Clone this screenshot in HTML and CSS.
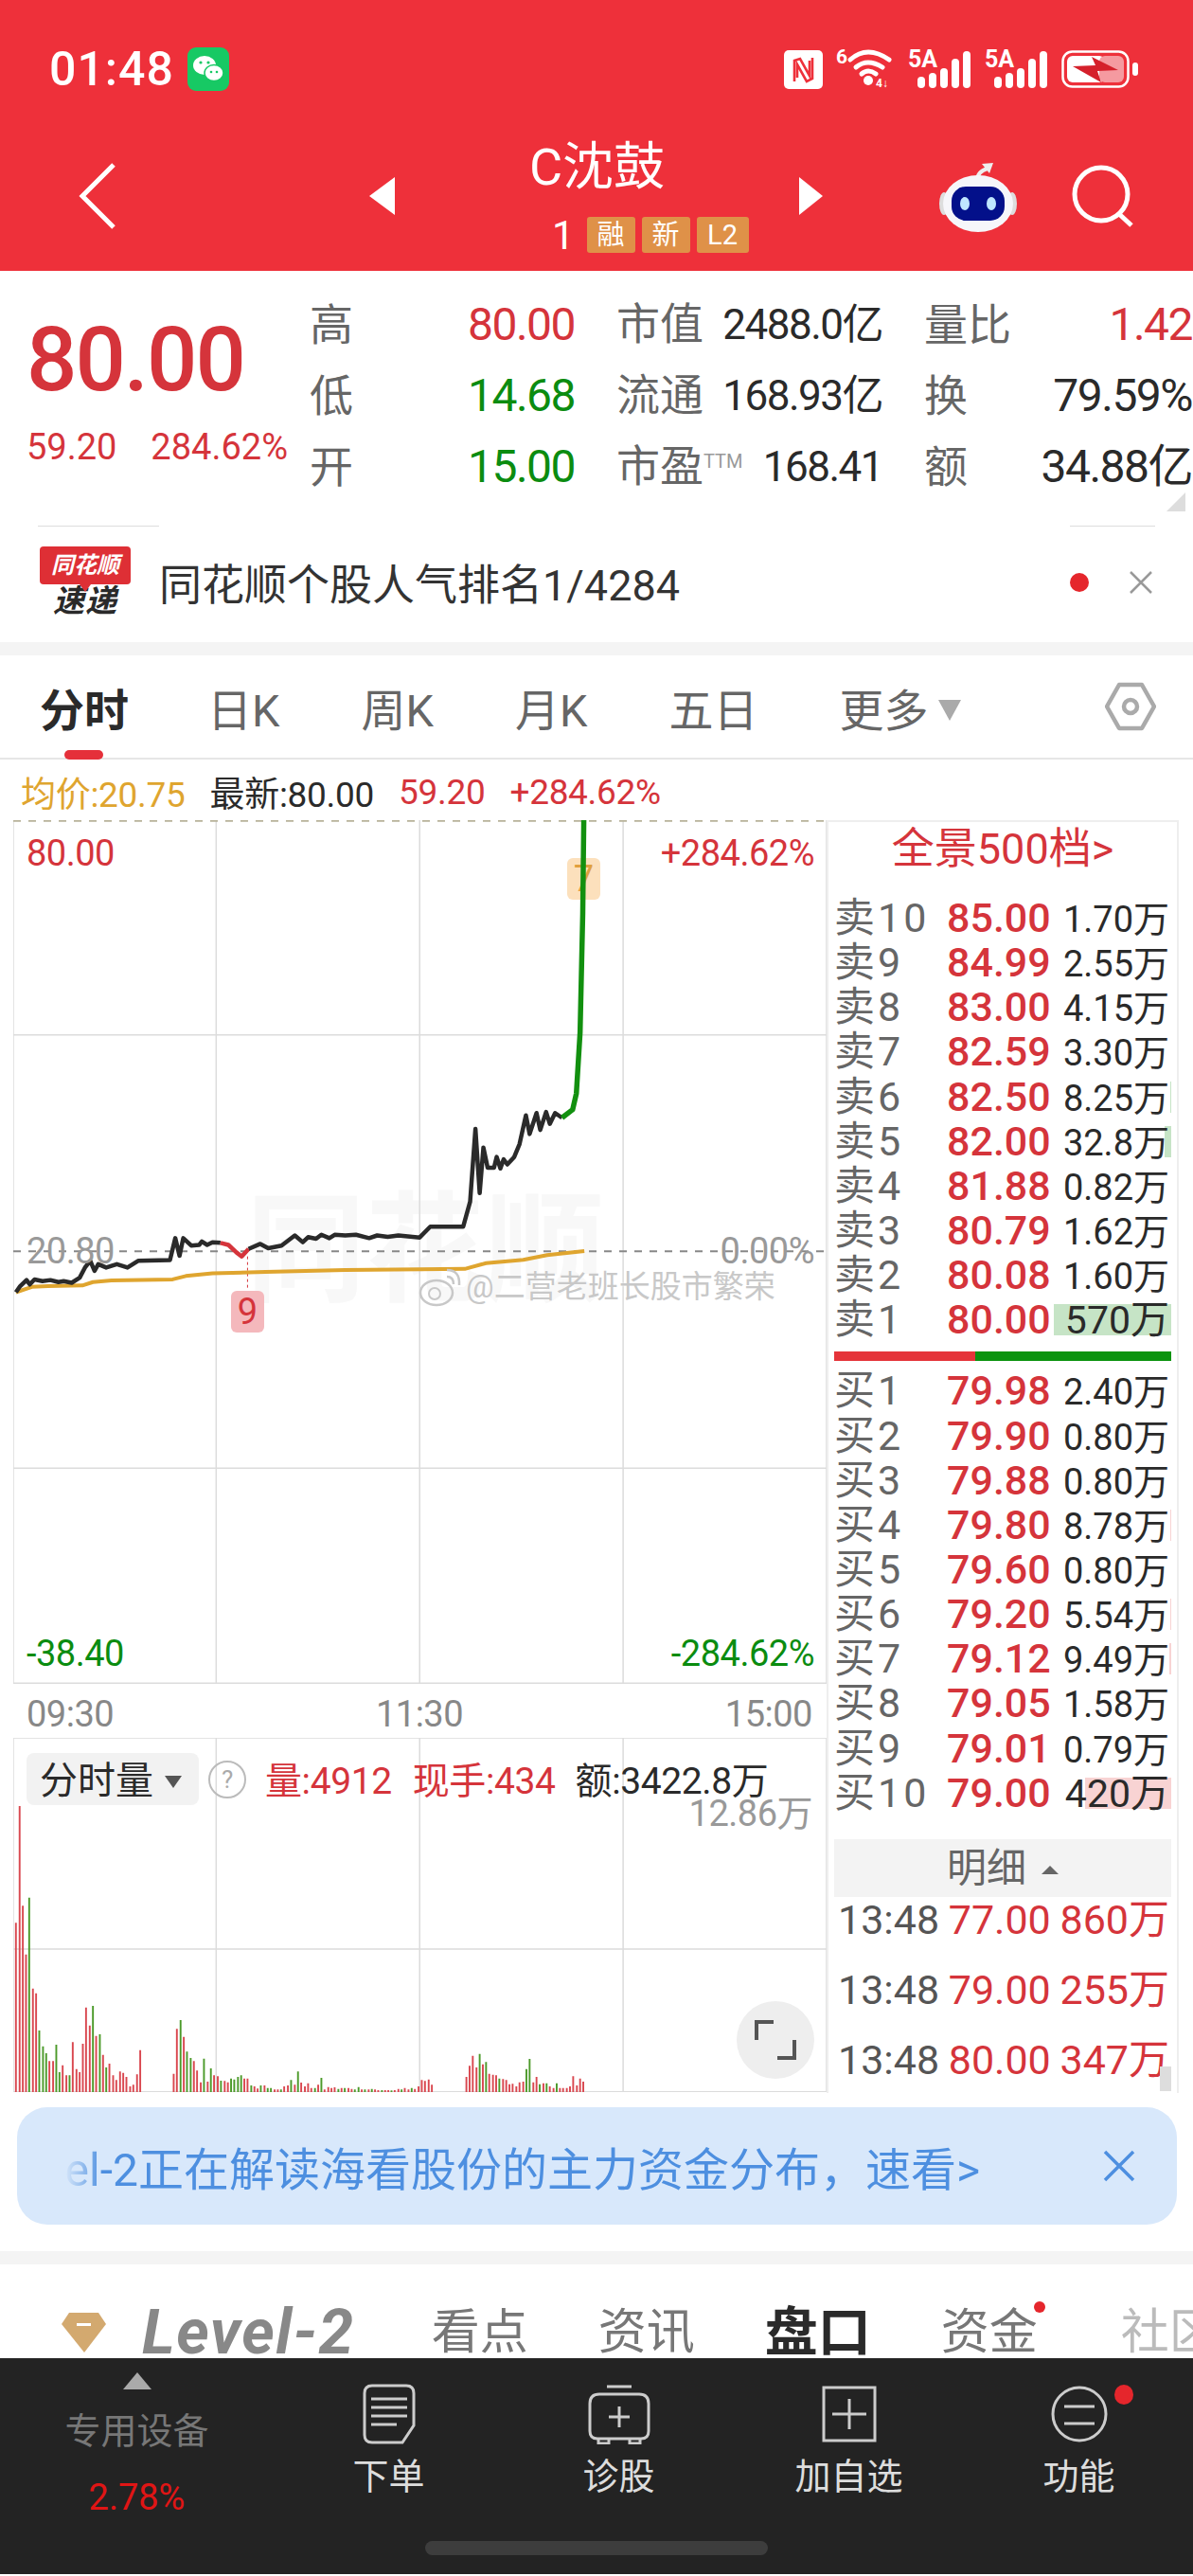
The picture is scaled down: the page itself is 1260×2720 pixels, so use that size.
FILE: index.html
```html
<!DOCTYPE html>
<html>
    <head>
        <meta charset="utf-8">
        <title>C沈鼓</title>
        <link rel="stylesheet" href="styles.css">
    </head>
    <body>
        <div class="topbar">
            <div class="status">
                <span class="clock">01:48</span>
                <svg class="wechat" viewBox="0 0 44 46"><rect width="44" height="46" rx="9" fill="#17C964"/><ellipse cx="18" cy="19" rx="12" ry="10" fill="#fff"/><ellipse cx="28" cy="27" rx="10" ry="8.5" fill="#fff" stroke="#17C964" stroke-width="1.5"/><circle cx="14" cy="16" r="1.6" fill="#17C964"/><circle cx="22" cy="16" r="1.6" fill="#17C964"/><circle cx="25" cy="26" r="1.3" fill="#17C964"/><circle cx="31" cy="26" r="1.3" fill="#17C964"/></svg>
                <div class="status-icons">
                    <svg class="ic-nfc" viewBox="0 0 41 41"><rect width="41" height="41" rx="5" fill="#fff"/><path d="M11 33V11L17 9 27 27V11M30 8V30L24 33 14 15V29" fill="none" stroke="#EE303A" stroke-width="2.6"/></svg>
                    <svg class="ic-wifi" viewBox="0 -6 62 54"><text x="0" y="18" class="ic-txt" font-size="21">6</text><path d="M15 14Q33 -2 56 14M21 22Q33 12 49 22M27 29Q34 23 42 29" fill="none" stroke="#fff" stroke-width="5" stroke-linecap="round"/><circle cx="34" cy="36" r="5" fill="#fff"/><text x="42" y="43" class="ic-txt" font-size="12">4↓</text></svg>
                    <svg class="ic-signal" viewBox="0 -6 67 48"><text x="0" y="19" class="ic-txt" font-size="25">5A</text><rect x="10" y="29" width="8" height="12" rx="4" fill="#fff"/><rect x="22" y="25" width="8" height="16" rx="4" fill="#fff"/><rect x="34" y="20" width="8" height="21" rx="4" fill="#fff"/><rect x="46" y="10" width="8" height="31" rx="4" fill="#fff"/><rect x="58" y="2" width="8" height="39" rx="4" fill="#fff"/></svg>
                    <svg class="ic-signal" viewBox="0 -6 67 48"><text x="0" y="19" class="ic-txt" font-size="25">5A</text><rect x="10" y="29" width="8" height="12" rx="4" fill="#fff"/><rect x="22" y="25" width="8" height="16" rx="4" fill="#fff"/><rect x="34" y="20" width="8" height="21" rx="4" fill="#fff"/><rect x="46" y="10" width="8" height="31" rx="4" fill="#fff"/><rect x="58" y="2" width="8" height="39" rx="4" fill="#fff"/></svg>
                    <svg class="ic-battery" viewBox="0 0 82 40"><rect x="1.5" y="1.5" width="69" height="37" rx="10" fill="none" stroke="#fff" stroke-width="2.5"/><rect x="6" y="6" width="40" height="28" rx="6" fill="#fff"/><rect x="40" y="6" width="26" height="28" rx="6" fill="#F59AA0"/><path d="M12 17L36 16 32 7 60 21 38 22 42 34Z" fill="#D5202B"/><rect x="75" y="13" width="6" height="14" rx="3" fill="#fff"/></svg>
                </div>
            </div>
            <div class="nav">
                <svg class="nav-back" viewBox="0 0 40 70"><path d="M37 2L4 35 37 68" fill="none" stroke="#fff" stroke-width="5"/></svg>
                <div class="nav-center">
                    <span class="tri-left"></span>
                    <div class="nav-title">
                        <div class="name">C沈鼓</div>
                        <div class="tags"><span class="rank">1</span><span class="tag">融</span><span class="tag">新</span><span class="tag tag-l2">L2</span></div>
                    </div>
                    <span class="tri-right"></span>
                </div>
                <div class="nav-right">
                    <svg class="robot" viewBox="0 0 84 76"><path d="M41 22Q41 12 52 9" fill="none" stroke="#eee" stroke-width="4"/><path d="M46 4L58 3 54 14Z" fill="#eee"/><ellipse cx="6" cy="46" rx="5" ry="12" fill="#ddd"/><ellipse cx="78" cy="46" rx="5" ry="12" fill="#ddd"/><ellipse cx="42" cy="46" rx="37" ry="30" fill="#F6F6FA"/><rect x="14" y="28" width="56" height="36" rx="15" fill="#03108A"/><ellipse cx="28" cy="46" rx="5" ry="7" fill="#BFE6FF"/><ellipse cx="56" cy="46" rx="5" ry="7" fill="#BFE6FF"/></svg>
                    <svg class="search" viewBox="0 0 66 66"><circle cx="31" cy="31" r="28" fill="none" stroke="#fff" stroke-width="5"/><path d="M50 52L63 64" stroke="#fff" stroke-width="5"/></svg>
                </div>
            </div>
        </div>

        <div class="quote">
            <div class="price-box">
                <div class="big-price">80.00</div>
                <div class="price-change"><span>59.20</span><span>284.62%</span></div>
            </div>
            <div class="stats">
                <div class="stat"><span class="lab">高</span><span class="red">80.00</span></div>
                <div class="stat stat-mid"><span class="lab">市值</span><span>2488.0亿</span></div>
                <div class="stat"><span class="lab">量比</span><span class="red">1.42</span></div>
                <div class="stat"><span class="lab">低</span><span class="green">14.68</span></div>
                <div class="stat stat-mid"><span class="lab">流通</span><span>168.93亿</span></div>
                <div class="stat"><span class="lab">换</span><span>79.59%</span></div>
                <div class="stat"><span class="lab">开</span><span class="green">15.00</span></div>
                <div class="stat stat-mid"><span class="lab">市盈<sup class="ttm">TTM</sup></span><span>168.41</span></div>
                <div class="stat"><span class="lab">额</span><span>34.88亿</span></div>
            </div>
            <span class="corner"></span>
        </div>

        <div class="notice">
            <span class="hair hair-l"></span>
            <span class="hair hair-r"></span>
            <div class="logo">
                <div class="logo-top">同花顺</div>
                <div class="logo-bottom">速递</div>
            </div>
            <div class="notice-text">同花顺个股人气排名1/4284</div>
            <span class="notice-dot"></span>
            <svg class="notice-x" viewBox="0 0 26 26"><path d="M2 2L24 24M24 2L2 24" stroke="#999" stroke-width="2.5"/></svg>
        </div>
        <div class="gap-band"></div>

        <div class="tabs">
            <span class="tab active">分时</span>
            <span class="tab">日K</span>
            <span class="tab">周K</span>
            <span class="tab">月K</span>
            <span class="tab">五日</span>
            <span class="tab">更多<i class="tab-tri"></i></span>
            <svg class="hex" viewBox="0 0 54 52"><path d="M15 3H39L52 26 39 49H15L2 26Z" fill="none" stroke="#aaa" stroke-width="4.5" stroke-linejoin="round"/><circle cx="27" cy="26" r="7" fill="none" stroke="#aaa" stroke-width="4.5"/></svg>
        </div>

        <div class="info-line">
            <span class="gold">均价:20.75</span>
            <span>最新:80.00</span>
            <span class="red">59.20</span>
            <span class="red">+284.62%</span>
        </div>

        <div class="main">
            <div class="left">
                <div class="chart">
                    <div class="watermark">同花顺</div>
                    <div class="badge badge-7">7</div>
                    <div class="badge badge-9">9</div>
                    <svg class="chart-svg" viewBox="25 22 1531 2554" preserveAspectRatio="none">
                        <path class="grid" d="M25 22V2576M407 22V2576M790 22V2576M1173 22V2576M1556 22V2576M25 657H1556M25 1938H1556M25 2574H1556"/>
                        <path class="dash-top" d="M25 23H1556"/>
                        <path class="dash-mid" d="M25 1297H1556"/>
                        <path class="mark-line" d="M466 1312V1410"/>
                        <polyline class="ln ln-gold" points="30,1418 60,1402 90,1400 155,1398 175,1388 210,1383 325,1380 350,1370 400,1362 500,1358 650,1352 790,1350 875,1349 915,1332 985,1322 1030,1308 1100,1296"/>
                        <polyline class="ln ln-black" points="30,1418 38,1400 50,1382 56,1395 65,1380 80,1385 95,1382 110,1388 120,1385 135,1390 150,1375 160,1345 170,1325 178,1355 185,1335 200,1345 220,1335 240,1345 260,1325 320,1323 330,1258 338,1310 345,1258 360,1280 375,1278 380,1268 390,1278 400,1270 415,1272"/>
                        <polyline class="ln ln-red" points="415,1272 430,1278 445,1300 455,1312 468,1290"/>
                        <polyline class="ln ln-black" points="468,1290 490,1275 505,1288 530,1280 555,1250 570,1270 580,1255 595,1260 605,1248 620,1258 630,1248 650,1250 670,1248 695,1258 710,1250 730,1254 750,1250 790,1256 810,1224 872,1224 885,1150 895,935 903,1125 910,990 918,1050 930,1050 935,1018 942,1052 948,1025 955,1040 968,1018 978,980 990,895 997,950 1010,888 1017,938 1028,885 1035,920 1045,888 1058,902"/>
                        <polyline class="ln ln-green" points="1058,902 1078,878 1085,830 1092,650 1097,300 1099,22"/>
                    </svg>
                    <span class="axis axis-l red c-top">80.00</span>
                    <span class="axis axis-r red c-top">+284.62%</span>
                    <span class="axis axis-l grey c-mid">20.80</span>
                    <span class="axis axis-r grey c-mid">0.00%</span>
                    <span class="axis axis-l green c-low">-38.40</span>
                    <span class="axis axis-r green c-low">-284.62%</span>
                    <div class="credit">
                        <svg class="weibo" viewBox="0 0 46 42"><ellipse cx="19" cy="27" rx="17" ry="13" fill="none" stroke="#c8c8c8" stroke-width="2.5"/><circle cx="17" cy="28" r="6" fill="none" stroke="#c8c8c8" stroke-width="2"/><path d="M30 3Q44 3 43 19M30 10Q37 10 37 18" fill="none" stroke="#c8c8c8" stroke-width="2.5"/></svg>
                        <span>@二营老班长股市繁荣</span>
                    </div>
                </div>
                <div class="times"><span>09:30</span><span>11:30</span><span>15:00</span></div>
                <div class="vol">
                    <svg class="vol-svg" viewBox="25 171 1531 1122" preserveAspectRatio="none">
                        <path class="grid" d="M25 171H1556M25 840H1556M25 1292H1556M25 171V1292M407 171V1292M790 171V1292M1173 171V1292M1556 171V1292"/>
                        <path class="bar-r" d="M30 757V1293M37 387V1293M43 703V1293M49 857V1293M62 965V1293M68 980V1293M93 1195V1293M100 1195V1293M118 1208V1293M125 1240V1293M137 1135V1293M144 1220V1293M150 1230V1293M156 1140V1293M162 1025V1293M169 1082V1293M181 1115V1293M194 1175V1293M206 1203V1293M213 1240V1293M219 1255V1293M226 1228V1293M232 1232V1293M238 1245V1293M245 1275V1293M251 1270V1293M258 1237V1293M264 1160V1293
                            M327 1235V1293M333 1093V1293M346 1118V1293M365 1195V1293M371 1225V1293M378 1262V1293M391 1260V1293M403 1240V1293M410 1243V1293M423 1258V1293M429 1262V1293M460 1250V1293M466 1250V1293M479 1275V1293M485 1282V1293M498 1272V1293M517 1285V1293M523 1285V1293M535 1275V1293M542 1272V1293M555 1270V1293M567 1263V1293M574 1275V1293M580 1265V1293M586 1280V1293M599 1270V1293M611 1285V1293M618 1277V1293M624 1280V1293M630 1278V1293M643 1280V1293M656 1280V1293M662 1283V1293M681 1285V1293M694 1285V1293M706 1285V1293M712 1287V1293M725 1287V1293M731 1287V1293M743 1287V1293M750 1283V1293M762 1280V1293M769 1285V1293M781 1283V1293M788 1275V1293M794 1255V1293M800 1258V1293M807 1253V1293M813 1270V1293
                            M878 1245V1293M884 1210V1293M890 1178V1293M897 1215V1293M909 1205V1293M921 1235V1293M928 1238V1293M934 1240V1293M947 1252V1293M953 1255V1293M959 1268V1293M965 1267V1293M972 1275V1293M978 1262V1293M985 1260V1293M1004 1262V1293M1010 1245V1293M1023 1265V1293M1035 1275V1293M1042 1280V1293M1054 1280V1293M1060 1280V1293M1067 1280V1293M1073 1275V1293M1079 1243V1293M1086 1272V1293M1092 1250V1293M1098 1260V1293"/>
                        <path class="bar-g" d="M55 677V1293M74 1098V1293M81 1148V1293M87 1170V1293M106 1143V1293M112 1230V1293M131 1240V1293M175 1020V1293M188 1110V1293M200 1215V1293
                            M340 1065V1293M352 1165V1293M359 1185V1293M384 1187V1293M397 1218V1293M416 1257V1293M435 1250V1293M441 1253V1293M448 1245V1293M454 1240V1293M473 1272V1293M491 1272V1293M504 1280V1293M510 1280V1293M529 1285V1293M548 1255V1293M561 1228V1293M593 1280V1293M605 1248V1293M637 1283V1293M649 1280V1293M668 1285V1293M675 1277V1293M687 1285V1293M700 1283V1293M719 1287V1293M737 1288V1293M756 1285V1293M775 1280V1293
                            M903 1172V1293M915 1198V1293M940 1250V1293M991 1220V1293M997 1188V1293M1016 1268V1293M1029 1265V1293M1048 1265V1293"/>
                    </svg>
                    <div class="vol-head">
                        <div class="vol-btn">分时量<i class="vol-tri"></i></div>
                        <span class="help">?</span>
                        <span class="vol-a red">量:4912</span>
                        <span class="vol-b red">现手:434</span>
                        <span class="vol-c">额:3422.8万</span>
                    </div>
                    <span class="vol-max">12.86万</span>
                    <div class="expand">
                        <svg viewBox="0 0 44 42"><path d="M20 2H2V21M24 40H42V21" fill="none" stroke="#555" stroke-width="4"/></svg>
                    </div>
                </div>
            </div>

            <div class="book">
                <div class="book-title">全景500档&gt;</div>
                <div class="asks">
                    <div class="row"><span class="who">卖10</span><span class="px">85.00</span><span class="qty">1.70万</span></div>
                    <div class="row"><span class="who">卖9</span><span class="px">84.99</span><span class="qty">2.55万</span></div>
                    <div class="row"><span class="who">卖8</span><span class="px">83.00</span><span class="qty">4.15万</span></div>
                    <div class="row"><span class="who">卖7</span><span class="px">82.59</span><span class="qty">3.30万</span></div>
                    <div class="row"><span class="who">卖6</span><span class="px">82.50</span><span class="qty">8.25万</span><i class="depth depth-g" style="width:1px"></i></div>
                    <div class="row"><span class="who">卖5</span><span class="px">82.00</span><span class="qty">32.8万</span><i class="depth depth-g" style="width:7px"></i></div>
                    <div class="row"><span class="who">卖4</span><span class="px">81.88</span><span class="qty">0.82万</span></div>
                    <div class="row"><span class="who">卖3</span><span class="px">80.79</span><span class="qty">1.62万</span></div>
                    <div class="row"><span class="who">卖2</span><span class="px">80.08</span><span class="qty">1.60万</span></div>
                    <div class="row"><span class="who">卖1</span><span class="px">80.00</span><span class="qty qty-big">570万</span><i class="depth depth-g" style="width:124px"></i></div>
                </div>
                <div class="ratio"><span class="ratio-r"></span><span class="ratio-g"></span></div>
                <div class="bids">
                    <div class="row"><span class="who">买1</span><span class="px">79.98</span><span class="qty">2.40万</span></div>
                    <div class="row"><span class="who">买2</span><span class="px">79.90</span><span class="qty">0.80万</span></div>
                    <div class="row"><span class="who">买3</span><span class="px">79.88</span><span class="qty">0.80万</span></div>
                    <div class="row"><span class="who">买4</span><span class="px">79.80</span><span class="qty">8.78万</span><i class="depth depth-p" style="width:1px"></i></div>
                    <div class="row"><span class="who">买5</span><span class="px">79.60</span><span class="qty">0.80万</span></div>
                    <div class="row"><span class="who">买6</span><span class="px">79.20</span><span class="qty">5.54万</span><i class="depth depth-p" style="width:1px"></i></div>
                    <div class="row"><span class="who">买7</span><span class="px">79.12</span><span class="qty">9.49万</span><i class="depth depth-p" style="width:2px"></i></div>
                    <div class="row"><span class="who">买8</span><span class="px">79.05</span><span class="qty">1.58万</span></div>
                    <div class="row"><span class="who">买9</span><span class="px">79.01</span><span class="qty">0.79万</span></div>
                    <div class="row"><span class="who">买10</span><span class="px">79.00</span><span class="qty qty-big">420万</span><i class="depth depth-p" style="width:91px"></i></div>
                </div>
                <div class="detail-head">明细<i class="detail-tri"></i></div>
                <div class="ticks">
                    <div class="tick"><span class="tick-t">13:48</span><span>77.00</span><span>860万</span></div>
                    <div class="tick"><span class="tick-t">13:48</span><span>79.00</span><span>255万</span></div>
                    <div class="tick"><span class="tick-t">13:48</span><span>80.00</span><span>347万</span></div>
                </div>
                <span class="scroll-thumb"></span>
            </div>
        </div>

        <div class="banner-wrap">
            <div class="banner">
                <div class="banner-clip"><span>Level-2正在解读海看股份的主力资金分布，速看&gt;</span></div>
                <svg class="banner-x" viewBox="0 0 34 34"><path d="M2 2L32 32M32 2L2 32" stroke="#4D8FE0" stroke-width="3.5"/></svg>
            </div>
        </div>
        <div class="gap-band"></div>

        <div class="bottom-tabs">
            <svg class="gem" viewBox="0 0 47 42"><path d="M8 0H39L47 12 24 42 0 12Z" fill="#D3A96F"/><rect x="16" y="11" width="15" height="3" fill="#fff"/></svg>
            <span class="level2">Level-2</span>
            <span>看点</span>
            <span>资讯</span>
            <span class="on">盘口</span>
            <span class="has-dot">资金</span>
            <span class="fade">社区</span>
        </div>

        <div class="footer">
            <div class="foot-grid">
                <div class="foot-item foot-first">
                    <i class="foot-tri"></i>
                    <span class="foot-dev">专用设备</span>
                    <span class="foot-pct">2.78%</span>
                </div>
                <div class="foot-item">
                    <svg class="foot-ic" viewBox="0 0 56 64"><path d="M10 2H46Q54 2 54 10V44L42 62H10Q2 62 2 54V10Q2 2 10 2Z"/><path d="M9 16H47M9 25H47M9 34H47M9 43H36"/></svg>
                    <span>下单</span>
                </div>
                <div class="foot-item">
                    <svg class="foot-ic" viewBox="0 0 66 64"><path d="M20 3H46M12 11H54Q64 11 64 21V50Q64 58 56 58H10Q2 58 2 50V21Q2 11 12 11ZM33 24V46M22 35H44"/><path d="M11 58V63H22V58M44 58V63H55V58"/></svg>
                    <span>诊股</span>
                </div>
                <div class="foot-item">
                    <svg class="foot-ic" viewBox="0 0 58 64"><path d="M2 4H56V60H2ZM29 16V48M11 32H47"/></svg>
                    <span>加自选</span>
                </div>
                <div class="foot-item foot-last">
                    <svg class="foot-ic" viewBox="0 0 60 64"><circle cx="30" cy="32" r="28"/><path d="M14 24H46M14 42H46"/></svg>
                    <span>功能</span>
                    <i class="foot-dot"></i>
                </div>
            </div>
            <div class="home-bar"></div>
        </div>
    </body>
</html>
```

FILE: styles.css
```css
html, body {
    margin: 0;
    padding: 0;
}
body {
    width: 1260px;
    height: 2720px;
    overflow: hidden;
    background-color: white;
    color: #2a2a2a;
    font-family: Roboto, "Noto Sans CJK SC", sans-serif;
}
i {
    font-style: normal;
}
.red {
    color: #D5343B;
}
.green {
    color: #0B8C10;
}
.gold {
    color: #DFA52F;
}
.grey {
    color: #999;
}

/* top red bar */
.topbar {
    height: 286px;
    background-color: #EE303A;
    color: white;
}
.status {
    height: 146px;
    display: flex;
    align-items: center;
    padding-left: 52px;
    box-sizing: border-box;
}
.clock {
    font-size: 50px;
    font-weight: 500;
    letter-spacing: 1px;
}
.wechat {
    width: 44px;
    height: 46px;
    margin-left: 14px;
}
.status-icons {
    margin-left: auto;
    margin-right: 57px;
    display: flex;
    align-items: center;
    gap: 14px;
}
.ic-txt {
    fill: white;
    font-family: Roboto, sans-serif;
    font-weight: 700;
}
.ic-nfc {
    width: 41px;
    height: 41px;
}
.ic-wifi {
    width: 62px;
    height: 54px;
    margin-top: -6px;
}
.ic-signal {
    width: 67px;
    height: 48px;
    margin-top: -6px;
}
.ic-battery {
    width: 82px;
    height: 40px;
}
.nav {
    height: 140px;
    padding-bottom: 18px;
    box-sizing: border-box;
    display: flex;
    align-items: center;
}
.nav-back {
    width: 40px;
    height: 70px;
    margin-left: 83px;
}
.nav-center {
    width: 479px;
    margin-left: 267px;
    display: flex;
    align-items: center;
    justify-content: space-between;
}
.tri-left {
    border: 20px solid transparent;
    border-left: 0;
    border-right: 27px solid white;
}
.tri-right {
    border: 20px solid transparent;
    border-right: 0;
    border-left: 25px solid white;
}
.nav-title {
    width: 320px;
    text-align: center;
}
.name {
    font-size: 54px;
    line-height: 60px;
}
.tags {
    margin-top: 22px;
    height: 38px;
    display: flex;
    align-items: center;
    justify-content: flex-end;
    gap: 7px;
}
.rank {
    font-size: 42px;
    margin-right: 6px;
}
.tag {
    height: 38px;
    min-width: 51px;
    padding: 0 2px;
    box-sizing: border-box;
    border-radius: 3px;
    background-color: #DF9148;
    font-size: 29px;
    line-height: 38px;
    text-align: center;
}
.tag-l2 {
    min-width: 55px;
}
.nav-right {
    margin-left: auto;
    margin-right: 62px;
    display: flex;
    align-items: center;
}
.robot {
    width: 84px;
    height: 76px;
}
.search {
    width: 66px;
    height: 66px;
    margin-left: 57px;
}

/* price block */
.quote {
    position: relative;
    height: 269px;
    padding-top: 19px;
    box-sizing: border-box;
    display: flex;
}
.price-box {
    flex: none;
    width: 327px;
    padding-left: 28px;
    box-sizing: border-box;
}
.big-price {
    margin-top: 18px;
    font-size: 94px;
    line-height: 114px;
    font-weight: 500;
    color: #D5343B;
    letter-spacing: -2px;
}
.price-change {
    margin-top: 13px;
    width: 276px;
    display: flex;
    justify-content: space-between;
    font-size: 38px;
    line-height: 44px;
    color: #D5343B;
}
.stats {
    flex: none;
    display: grid;
    grid-template-columns: 280px 281px 283px;
    grid-auto-rows: 75px;
    column-gap: 44px;
}
.stat {
    display: flex;
    justify-content: space-between;
    align-items: baseline;
    font-size: 48px;
    line-height: 75px;
    letter-spacing: -1.5px;
    white-space: nowrap;
}
.stat-mid {
    font-size: 44px;
}
.lab {
    color: #666;
    font-size: 46px;
    letter-spacing: 0;
}
.ttm {
    font-size: 20px;
    color: #999;
    vertical-align: 14px;
    line-height: 0;
}
.corner {
    position: absolute;
    right: 8px;
    bottom: 15px;
    border-left: 20px solid transparent;
    border-bottom: 20px solid #ddd;
}

/* notice row */
.notice {
    position: relative;
    height: 123px;
    padding-bottom: 4px;
    box-sizing: border-box;
    display: flex;
    align-items: center;
    padding-left: 42px;
}
.hair {
    position: absolute;
    top: 0;
    height: 1px;
    background-color: #ddd;
}
.hair-l {
    left: 40px;
    width: 128px;
}
.hair-r {
    left: 1130px;
    width: 90px;
}
.logo {
    width: 96px;
    height: 76px;
    text-align: center;
    font-style: italic;
    font-weight: 700;
}
.logo-top {
    position: relative;
    height: 40px;
    border-radius: 4px;
    background-color: #DE2F35;
    color: white;
    font-size: 24px;
    line-height: 40px;
}
.logo-top::after {
    content: "";
    position: absolute;
    left: 42px;
    bottom: -8px;
    border: 6px solid transparent;
    border-bottom: 0;
    border-top: 8px solid #DE2F35;
}
.logo-bottom {
    font-size: 33px;
    line-height: 36px;
    letter-spacing: 1px;
}
.notice-text {
    margin-left: 30px;
    font-size: 45px;
    color: #333;
}
.notice-dot {
    width: 20px;
    height: 20px;
    margin-left: auto;
    border-radius: 50%;
    background-color: #E5262C;
}
.notice-x {
    width: 26px;
    height: 26px;
    margin: 0 42px;
}
.gap-band {
    height: 14px;
    background-color: #F4F4F4;
}

/* chart tabs */
.tabs {
    height: 110px;
    box-sizing: border-box;
    border-bottom: 2px solid #e6e6e6;
    padding-left: 42px;
    display: flex;
    align-items: center;
    gap: 86px;
    font-size: 47px;
    color: #666;
}
.tab {
    position: relative;
    white-space: nowrap;
}
.active {
    font-weight: 700;
    color: #2a2a2a;
    margin-right: -3px;
}
.active::after {
    content: "";
    position: absolute;
    left: 26px;
    bottom: -21px;
    width: 41px;
    height: 10px;
    border-radius: 5px;
    background-color: #E5303A;
}
.tab-tri {
    display: inline-block;
    margin-left: 10px;
    vertical-align: 6px;
    border: 12px solid transparent;
    border-bottom: 0;
    border-top: 22px solid #aaa;
}
.hex {
    width: 54px;
    height: 52px;
    margin-left: auto;
    margin-right: 39px;
}
.info-line {
    height: 64px;
    padding: 4px 0 0 22px;
    box-sizing: border-box;
    display: flex;
    align-items: center;
    gap: 26px;
    font-size: 37px;
    letter-spacing: -0.3px;
}

/* chart + order book */
.main {
    display: flex;
    height: 1344px;
}
.left {
    width: 859px;
    margin-left: 14px;
}
.chart {
    position: relative;
    height: 912px;
    overflow: hidden;
}
.chart-svg, .vol-svg {
    position: absolute;
    left: 0;
    top: 0;
    width: 859px;
}
.chart-svg {
    height: 912px;
}
.vol-svg {
    height: 374px;
}
.grid {
    fill: none;
    stroke: #dcdcdc;
    stroke-width: 1.5px;
    vector-effect: non-scaling-stroke;
}
.dash-top {
    fill: none;
    stroke: #B8B39A;
    stroke-width: 3px;
    stroke-dasharray: 8 8;
    vector-effect: non-scaling-stroke;
}
.dash-mid {
    fill: none;
    stroke: #888;
    stroke-width: 2px;
    stroke-dasharray: 8 8;
    vector-effect: non-scaling-stroke;
}
.mark-line {
    fill: none;
    stroke: #D5343B;
    stroke-width: 1px;
    stroke-dasharray: 3 3;
    vector-effect: non-scaling-stroke;
}
.ln {
    fill: none;
    stroke-width: 4.5px;
    stroke-linejoin: round;
    vector-effect: non-scaling-stroke;
}
.ln-gold {
    stroke: #DFA52F;
    stroke-width: 4px;
}
.ln-black {
    stroke: #2a2a2a;
}
.ln-red {
    stroke: #D5343B;
}
.ln-green {
    stroke: #12900F;
    stroke-width: 5.5px;
}
.watermark {
    position: absolute;
    left: 246px;
    top: 390px;
    font-size: 126px;
    line-height: 130px;
    font-weight: 700;
    color: #F8F8F8;
    white-space: nowrap;
}
.badge {
    position: absolute;
    width: 35px;
    height: 44px;
    border-radius: 6px;
    text-align: center;
    font-size: 38px;
    line-height: 44px;
}
.badge-7 {
    left: 585px;
    top: 40px;
    background-color: #FCE0BC;
    color: #E0A040;
}
.badge-9 {
    left: 230px;
    top: 497px;
    background-color: #F4B8BC;
    color: #D5343B;
}
.axis {
    position: absolute;
    font-size: 38px;
    line-height: 44px;
    letter-spacing: -0.5px;
}
.axis-l {
    left: 14px;
}
.axis-r {
    right: 13px;
}
.c-top {
    top: 13px;
}
.c-mid {
    top: 433px;
}
.c-low {
    top: 858px;
}
.credit {
    position: absolute;
    left: 428px;
    top: 472px;
    display: flex;
    align-items: center;
    gap: 4px;
    font-size: 33px;
    line-height: 40px;
    color: #c8c8c8;
    white-space: nowrap;
    text-shadow: 0 0 2px white;
}
.weibo {
    width: 46px;
    height: 42px;
}
.times {
    height: 57px;
    padding: 6px 15px 0 14px;
    box-sizing: border-box;
    display: flex;
    align-items: center;
    justify-content: space-between;
    font-size: 38px;
    color: #888;
    letter-spacing: -0.5px;
}
.vol {
    position: relative;
    height: 375px;
}
.bar-r, .bar-g {
    fill: none;
    stroke-width: 3.4;
}
.bar-r {
    stroke: #D9474F;
}
.bar-g {
    stroke: #4C9A2A;
}
.vol-head {
    position: relative;
    padding: 13px 0 0 14px;
    display: flex;
    align-items: center;
    font-size: 39px;
    line-height: 55px;
    letter-spacing: -0.4px;
    white-space: nowrap;
}
.vol-btn {
    width: 182px;
    height: 55px;
    box-sizing: border-box;
    padding-left: 14px;
    border-radius: 8px;
    background-color: #F2F2F2;
    font-size: 40px;
    line-height: 59px;
    letter-spacing: 0;
    white-space: nowrap;
}
.vol-tri {
    display: inline-block;
    margin-left: 12px;
    vertical-align: 6px;
    border: 9px solid transparent;
    border-bottom: 0;
    border-top: 13px solid #555;
}
.help {
    width: 36px;
    height: 36px;
    margin-left: 10px;
    border: 2px solid #bbb;
    border-radius: 50%;
    color: #aaa;
    font-size: 26px;
    line-height: 36px;
    text-align: center;
}
.vol-a {
    margin: 6px 0 0 20px;
}
.vol-b {
    margin: 6px 0 0 22px;
}
.vol-c {
    margin: 6px 0 0 21px;
}
.vol-max {
    position: absolute;
    right: 15px;
    top: 58px;
    font-size: 38px;
    line-height: 44px;
    color: #999;
    letter-spacing: -0.5px;
}
.expand {
    position: absolute;
    left: 764px;
    top: 278px;
    width: 82px;
    height: 82px;
    border-radius: 50%;
    background-color: #EEE;
    display: flex;
    align-items: center;
    justify-content: center;
}
.expand svg {
    width: 44px;
    height: 42px;
}
.book {
    position: relative;
    width: 372px;
    box-sizing: border-box;
    border-left: 2px solid #eee;
    border-right: 2px solid #eee;
    border-top: 2px solid #eee;
    padding: 0 6px;
}
.book-title {
    height: 57px;
    margin-bottom: 21px;
    text-align: center;
    font-size: 45px;
    line-height: 57px;
    color: #D5343B;
}
.row {
    position: relative;
    height: 47.15px;
    display: flex;
    align-items: baseline;
    line-height: 47px;
}
.who {
    width: 119px;
    font-size: 43px;
    letter-spacing: 3px;
    color: #666;
    white-space: nowrap;
}
.px {
    position: relative;
    z-index: 1;
    width: 112px;
    font-size: 43px;
    font-weight: 500;
    color: #D5343B;
}
.qty {
    position: relative;
    z-index: 1;
    margin-left: auto;
    margin-right: 2px;
    font-size: 38px;
    white-space: nowrap;
}
.qty-big {
    font-size: 41px;
}
.depth {
    position: absolute;
    right: 0;
    top: 7px;
    bottom: 7px;
}
.depth-g {
    background-color: #C6E4C6;
}
.depth-p {
    background-color: #F8D3D3;
}
.ratio {
    height: 10px;
    margin: 10px 0 8px;
    display: flex;
}
.ratio-r {
    width: 149px;
    background-color: #E5343A;
}
.ratio-g {
    flex: 1;
    background-color: #0B930F;
}
.detail-head {
    height: 61px;
    margin-top: 25px;
    background-color: #F3F3F3;
    text-align: center;
    font-size: 42px;
    line-height: 61px;
    color: #666;
}
.detail-tri {
    display: inline-block;
    margin-left: 16px;
    vertical-align: 8px;
    border: 9px solid transparent;
    border-top: 0;
    border-bottom: 9px solid #666;
}
.ticks {
    display: flex;
    flex-direction: column;
    gap: 26px;
}
.tick {
    height: 48px;
    padding: 0 2px 0 4px;
    display: flex;
    align-items: baseline;
    justify-content: space-between;
    font-size: 43px;
    line-height: 48px;
    color: #D5343B;
}
.tick-t {
    color: #555;
}
.scroll-thumb {
    position: absolute;
    right: 6px;
    bottom: 2px;
    width: 12px;
    height: 26px;
    background-color: #ddd;
}

/* banner */
.banner-wrap {
    height: 167px;
    padding: 15px 17px 0 18px;
    box-sizing: border-box;
}
.banner {
    height: 124px;
    padding-left: 50px;
    border-radius: 32px;
    background-color: #D8E8FB;
    display: flex;
    align-items: center;
}
.banner-clip {
    width: 967px;
    overflow: hidden;
    display: flex;
    justify-content: flex-end;
    font-size: 48px;
    color: #4D8FE0;
    white-space: nowrap;
    mask-image: linear-gradient(to right, transparent, black 40px);
    -webkit-mask-image: linear-gradient(to right, transparent, black 40px);
}
.banner-x {
    width: 34px;
    height: 34px;
    margin-left: 130px;
}

/* lower tabs */
.bottom-tabs {
    height: 99px;
    padding: 44px 0 0 65px;
    box-sizing: border-box;
    overflow: hidden;
    display: flex;
    align-items: center;
    gap: 74px;
    font-size: 51px;
    line-height: 58px;
    color: #777;
    white-space: nowrap;
}
.gem {
    flex: none;
    width: 47px;
    height: 42px;
    margin-right: -36px;
}
.level2 {
    font-size: 66px;
    font-weight: 700;
    font-style: italic;
    color: #888;
    letter-spacing: 1.5px;
    margin-right: 7px;
}
.on {
    font-size: 56px;
    font-weight: 700;
    color: #2a2a2a;
}
.has-dot {
    position: relative;
}
.has-dot::after {
    content: "";
    position: absolute;
    right: -8px;
    top: -4px;
    width: 12px;
    height: 12px;
    border-radius: 50%;
    background-color: #E5262C;
}
.fade {
    margin-left: 14px;
    color: #bbb;
}

/* footer */
.footer {
    height: 228px;
    background-color: #232323;
}
.foot-grid {
    height: 193px;
    display: grid;
    grid-template-columns: 289px repeat(4, 243px);
}
.foot-item {
    position: relative;
    padding-top: 27px;
    display: flex;
    flex-direction: column;
    align-items: center;
    font-size: 38px;
    line-height: 50px;
    color: #ddd;
}
.foot-ic {
    width: 66px;
    height: 64px;
    margin-bottom: 9px;
    fill: none;
    stroke: #ccc;
    stroke-width: 3;
}
.foot-first {
    padding-top: 15px;
}
.foot-tri {
    border: 15px solid transparent;
    border-top: 0;
    border-bottom: 18px solid #aaa;
}
.foot-dev {
    margin-top: 19px;
    color: #777;
}
.foot-pct {
    margin-top: 20px;
    color: #E01515;
}
.foot-dot {
    position: absolute;
    left: 159px;
    top: 28px;
    width: 20px;
    height: 21px;
    border-radius: 50%;
    background-color: #E5262C;
}
.home-bar {
    width: 362px;
    height: 15px;
    margin: 0 auto;
    border-radius: 8px;
    background-color: #3D3D3D;
}
```
